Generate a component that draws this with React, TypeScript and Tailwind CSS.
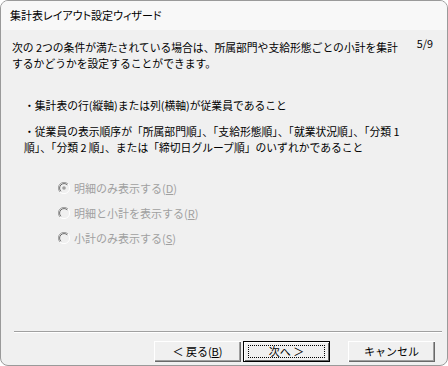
import React from 'react';

const font = { fontFamily: '"Noto Sans CJK JP", "Noto Sans", sans-serif' };

function Radio({ checked }: { checked?: boolean }) {
  return (
    <svg width="12" height="12" viewBox="0 0 12 12" className="shrink-0">
      <circle cx="6" cy="6" r="5.5" fill="#f0f0f0" />
      <path d="M10 2 A5.5 5.5 0 0 0 2 10" stroke="#a0a0a0" strokeWidth="1" fill="none" />
      <path d="M9.3 2.9 A4.5 4.5 0 0 0 2.9 9.3" stroke="#696969" strokeWidth="1" fill="none" />
      <path d="M2 10 A5.5 5.5 0 0 0 10 2" stroke="#ffffff" strokeWidth="1" fill="none" />
      {checked && <circle cx="6" cy="6" r="1.8" fill="#a0a0a0" />}
    </svg>
  );
}

function Option({ label, mnemonic, checked }: { label: string; mnemonic: string; checked?: boolean }) {
  return (
    <div className="flex items-center gap-[4px] h-[13px]">
      <Radio checked={checked} />
      <span className="text-[11px] leading-[14px] text-[#a0a0a0]">
        {label}(<span className="underline">{mnemonic}</span>)
      </span>
    </div>
  );
}

function WinButton({ children, focused }: { children: React.ReactNode; focused?: boolean }) {
  return (
    <button
      className={`h-[21px] w-[87px] bg-[#f0f0f0] text-[11px] leading-none text-black flex items-center justify-center ${
        focused
          ? 'border border-black shadow-[inset_1px_1px_0_#fff,inset_-1px_-1px_0_#696969]'
          : 'shadow-[inset_1px_1px_0_#fff,inset_-1px_-1px_0_#696969,inset_-2px_-2px_0_#a0a0a0]'
      }`}
    >
      {focused ? (
        <span className="flex items-center justify-center w-[77px] h-[13px] border border-dotted border-black">{children}</span>
      ) : (
        children
      )}
    </button>
  );
}

export default function App() {
  return (
    <div className="w-[448px] h-[366px] bg-white" style={font}>
      <div className="w-full h-full rounded-[8px] border border-[#9a9a9a] overflow-hidden flex flex-col bg-[#f0f0f0]">
        {/* Title bar */}
        <div className="h-[29px] shrink-0 bg-[#f8f8f8] flex items-center pl-[9px]">
          <span className="text-[11px] text-black [font-feature-settings:'palt']">集計表レイアウト設定ウィザード</span>
        </div>

        {/* Body */}
        <div className="flex-1 flex flex-col pl-[11px] pr-[12px] pt-[9px] text-black text-[10.8px]">
          <div className="flex justify-between">
            <p className="leading-[16px]">
              次の 2つの条件が満たされている場合は、所属部門や支給形態ごとの小計を集計
              <br />
              するかどうかを設定することができます。
            </p>
            <span className="leading-[13px] -mt-[2px] mr-[2px]">5/9</span>
          </div>

          <p className="leading-[16px] mt-[26px] pl-[12px]">・集計表の行(縦軸)または列(横軸)が従業員であること</p>
          <p className="leading-[16px] mt-[10px] pl-[12px]">
            ・従業員の表示順序が「所属部門順」、「支給形態順」、「就業状況順」、「分類 1
            <br />
            順」、「分類 2 順」、または「締切日グループ順」のいずれかであること
          </p>

          <div className="flex flex-col gap-[12px] mt-[26px] pl-[46px]">
            <Option label="明細のみ表示する" mnemonic="D" checked />
            <Option label="明細と小計を表示する" mnemonic="R" />
            <Option label="小計のみ表示する" mnemonic="S" />
          </div>

          <div className="flex-1" />
          <div className="h-[2px] border-t border-[#a0a0a0] border-b-white border-b ml-[2px] mr-[-7px]" />

          <div className="flex justify-end items-center mt-[8px] mb-[3px]">
            <WinButton>
              ＜ 戻る(<span className="underline">B</span>)
            </WinButton>
            <div className="w-[2px]" />
            <WinButton focused>次へ ＞</WinButton>
            <div className="w-[18px]" />
            <WinButton>キャンセル</WinButton>
          </div>
        </div>
      </div>
    </div>
  );
}
